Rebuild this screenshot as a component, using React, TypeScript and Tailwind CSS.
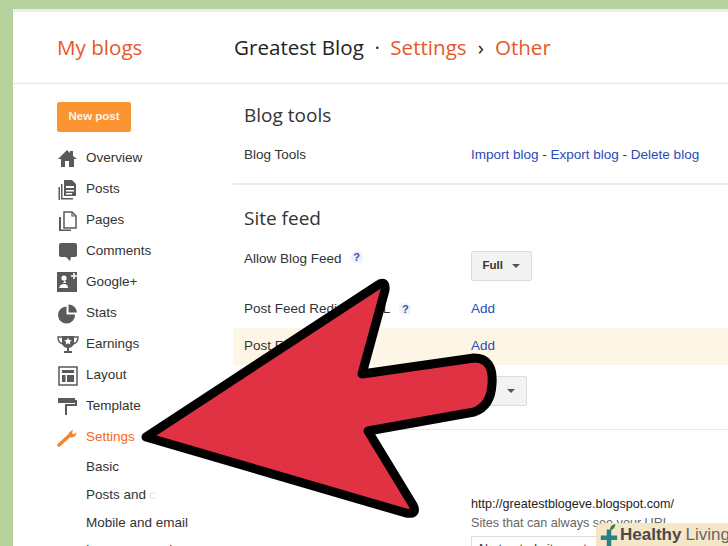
const navItems = [
  { label: "Overview", icon: "home" },
  { label: "Posts", icon: "posts" },
  { label: "Pages", icon: "pages" },
  { label: "Comments", icon: "comments" },
  { label: "Google+", icon: "google" },
  { label: "Stats", icon: "stats" },
  { label: "Earnings", icon: "earnings" },
  { label: "Layout", icon: "layout" },
  { label: "Template", icon: "template" },
];

const NavIcon = ({ name }: { name: string }) => {
  return (
    <svg width="22" height="22" viewBox="0 0 22 22" fill="#5a5a5a" className="shrink-0">
      {name === "home" && (
        <path d="M1 11 L10 2 L13 5 L13 3 L16 3 L16 8 L20 11 L17 11 L17 19 L12 19 L12 13 L8 13 L8 19 L4 19 L4 11 Z" />
      )}
      {name === "posts" && (
        <>
          <path d="M7 1 H15 L19 5 V17 H7 Z M9 7 V9 H17 V7 Z M9 11 V12.5 H17 V11 Z M9 14 V15.5 H15 V14 Z" fillRule="evenodd" />
          <path d="M4 5 H5.5 V19 H16 V20.5 H4 Z" />
          <path d="M1.5 8 H3 V21 H1.5 Z" />
        </>
      )}
      {name === "pages" && (
        <>
          <path d="M7 2 H15 L19 6 V18 H7 Z" fill="#fff" stroke="#5a5a5a" strokeWidth="1.5" />
          <path d="M15 2 V6 H19" fill="none" stroke="#5a5a5a" strokeWidth="1.2" />
          <path d="M2 7 H4 V19.5 H14 V21 H2 Z" />
        </>
      )}
      {name === "comments" && (
        <path d="M4 2 H18 Q20 2 20 4 V14 Q20 16 18 16 H14 L13 20 L9 16 H4 Q2 16 2 14 V4 Q2 2 4 2 Z" />
      )}
      {name === "google" && (
        <>
          <rect x="0" y="0" width="20" height="20" />
          <path d="M14 4 H20 M17 1 V7" stroke="#fff" strokeWidth="1.6" />
          <circle cx="7" cy="6" r="2.6" fill="#fff" />
          <path d="M2 16 Q3 12 7 12 Q11 12 11 16 Z" fill="#fff" />
          <path d="M8 8 L9 11 L6 11 Z" fill="#fff" />
        </>
      )}
      {name === "stats" && (
        <>
          <path d="M9.5 3.5 V11.5 H18 A8.5 8.5 0 1 1 9.5 3.5 Z" />
          <path d="M11.5 1.5 A8.5 8.5 0 0 1 20 9.5 H11.5 Z" />
        </>
      )}
      {name === "earnings" && (
        <>
          <path d="M5 2 H17 V8 Q17 13 12 14 V17 H15 V19 H7 V17 H10 V14 Q5 13 5 8 Z" />
          <path d="M5 3 H1 Q1 9 6 10 M17 3 H21 Q21 9 16 10" fill="none" stroke="#5a5a5a" strokeWidth="1.4" />
          <path d="M11 3.5 L12.2 6 L14.8 6.3 L12.9 8 L13.4 10.5 L11 9.2 L8.6 10.5 L9.1 8 L7.2 6.3 L9.8 6 Z" fill="#fff" />
        </>
      )}
      {name === "layout" && (
        <>
          <rect x="2" y="2" width="18" height="18" fill="none" stroke="#5a5a5a" strokeWidth="1.5" />
          <rect x="5" y="5" width="12" height="3" />
          <rect x="5" y="10" width="3.5" height="7" />
          <rect x="10" y="10" width="7" height="7" />
        </>
      )}
      {name === "template" && (
        <>
          <path d="M1 2 H18 V7 H1 Z" />
          <path d="M18 4 H20 V10 H10 V19 H8 V8 H18 Z" />
        </>
      )}
    </svg>
  );
};

const Help = () => {
  return (
    <span className="ml-[9px] flex h-[12px] w-[12px] items-center justify-center rounded-full bg-[#eef1f8] text-[11px] font-bold text-[#3a50b0]">
      ?
    </span>
  );
};

const Sidebar = () => {
  return (
    <div className="w-[220px] shrink-0 pl-[44px] pt-[18px]">
      <button className="flex h-[30px] w-[74px] items-center justify-center rounded-[2px] border border-[#f0973a] bg-[#fb9431] text-[11.5px] font-bold text-[#fff3e4]">
        New post
      </button>
      <div className="mt-[11px] flex flex-col">
        {navItems.map((item) => (
          <div key={item.label} className="flex h-[31px] items-center text-[#333]">
            <div className="w-[29px]">
              <NavIcon name={item.icon} />
            </div>
            <span>{item.label}</span>
          </div>
        ))}
        <div className="flex h-[31px] items-center text-[#f26a21]">
          <div className="w-[29px]">
            <svg width="20" height="20" viewBox="0 0 20 20" className="shrink-0">
              <path d="M2 17 L12 8" stroke="#f5842b" strokeWidth="3.6" strokeLinecap="round" />
              <path d="M12.5 9 Q10 5 13.5 3.5 L16 1.5 L15 5 L17 6.5 L19.5 4 Q19.5 8.5 15 9.5 Z" fill="#f5842b" />
            </svg>
          </div>
          <span>Settings</span>
        </div>
        <div className="ml-[29px] flex flex-col text-[#333]">
          <div className="flex h-[28px] items-center">Basic</div>
          <div className="flex h-[28px] items-center">
            Posts and <span className="ml-[3px] text-[#e8e8e8]">c</span>
          </div>
          <div className="flex h-[28px] items-center">Mobile and email</div>
          <div className="flex h-[26px] items-center">Language and</div>
        </div>
      </div>
    </div>
  );
};

const Dropdown = ({ label, width, gap }: { label: string; width: string; gap: string }) => {
  return (
    <div className={`flex h-[30px] items-center justify-end rounded-[2px] border border-[#dcdcdc] bg-[#f3f3f3] pr-[11px] text-[11.5px] font-bold text-[#333] ${width} ${gap}`}>
      <span>{label}</span>
      <span className="h-0 w-0 border-x-[4px] border-t-[4px] border-x-transparent border-t-[#555]" />
    </div>
  );
};

const Main = () => {
  return (
    <div className="min-w-0 flex-1 pt-[18px] text-[#333]">
      <h2 className="ml-[11px] font-['Open_Sans',sans-serif] text-[19px] leading-[26px] text-[#333]">Blog tools</h2>
      <div className="mt-[17px] flex h-[20px] items-center pl-[11px]">
        <span className="w-[227px]">Blog Tools</span>
        <span className="whitespace-nowrap text-[#2b4bb8]">
          Import blog <span className="text-[#333]">-</span> Export blog <span className="text-[#333]">-</span> Delete blog
        </span>
      </div>
      <div className="mt-[18px] h-[2px] bg-[#ececec]" />
      <h2 className="ml-[11px] mt-[20px] font-['Open_Sans',sans-serif] text-[19px] leading-[26px] text-[#333]">Site feed</h2>
      <div className="mt-[20px] flex h-[30px] pl-[11px]">
        <div className="flex w-[227px] items-start leading-[16px]">
          Allow Blog Feed
          <Help />
        </div>
        <Dropdown label="Full" width="w-[61px]" gap="gap-[9px]" />
      </div>
      <div className="mt-[18px] flex h-[20px] items-center pl-[11px]">
        <div className="flex w-[227px] items-center">
          Post Feed Redirect URL
          <Help />
        </div>
        <span className="text-[#2b4bb8]">Add</span>
      </div>
      <div className="mt-[9px] flex h-[37px] items-center bg-[#fdf6e6] pl-[11px]">
        <span className="w-[227px]">Post Feed Footer</span>
        <span className="text-[#2b4bb8]">Add</span>
      </div>
      <div className="mt-[11px] flex h-[30px] pl-[238px]">
        <Dropdown label="No" width="w-[56px]" gap="gap-[22px]" />
      </div>
      <div className="mt-[23px] h-px bg-[#e8e8e8]" />
      <div className="ml-[238px] mt-[66px] whitespace-nowrap text-[12.6px] leading-[16px] text-[#222]">
        http://greatestblogeve.blogspot.com/
      </div>
      <div className="ml-[238px] mt-[3px] whitespace-nowrap text-[12.6px] leading-[16px] text-[#666]">
        Sites that can always see your URL
      </div>
      <div className="ml-[238px] mt-[5px] h-[30px] w-[240px] border border-[#ddd] px-[7px] pt-[3px] text-[12.6px] text-[#333]">
        No trusted sites yet
      </div>
    </div>
  );
};

const Arrow = () => {
  return (
    <svg width="728" height="546" viewBox="0 0 728 546" className="pointer-events-none absolute left-0 top-0">
      <path
        d="M146 437 L378 285 Q386 280 385 290 L362 374 L474 358 Q494 358 492 384 Q491 406 474 412 L368 431 L413 505 Q418 515 406 513 Z"
        fill="#e03243"
        stroke="#000"
        strokeWidth="9"
        strokeLinejoin="round"
      />
    </svg>
  );
};

const Badge = () => {
  return (
    <div className="absolute bottom-0 right-0 flex h-[23px] w-[132px] items-center whitespace-nowrap rounded-tl-[6px] bg-[#f5e6c8] pl-[3px] text-[#4a4a4a]">
      <svg width="20" height="22" viewBox="0 0 22 24" className="shrink-0 self-end">
        <path d="M2 15 H20 M11 6 V24" stroke="#2f7f86" strokeWidth="5" />
        <path d="M12 7 Q12 1 18 0 Q18 6 12 7 Z" fill="#3f7d45" />
      </svg>
      <span className="ml-px text-[17px] leading-none font-bold">Healthy</span>
      <span className="ml-[4px] text-[17px] leading-none text-[#666]">Living</span>
    </div>
  );
};

const App = () => {
  return (
    <div className="relative h-[546px] w-[728px] overflow-hidden bg-[#b5d29d] pl-[13px] pt-[9px] font-['Liberation_Sans',sans-serif] text-[13.5px]">
      <div className="h-full border-t-[3px] border-[#ececec] bg-white">
        <div className="flex h-[72px] items-center border-b border-[#e6e6e6] font-['Open_Sans',sans-serif] text-[20.6px]">
          <span className="ml-[44px] w-[177px] text-[#e8572a]">My blogs</span>
          <span className="text-[#222]">Greatest Blog</span>
          <span className="mx-[10.5px] text-[#222]">·</span>
          <span className="text-[#e8572a]">Settings</span>
          <span className="mx-[11px] text-[#222]">›</span>
          <span className="text-[#e8572a]">Other</span>
        </div>
        <div className="flex">
          <Sidebar />
          <Main />
        </div>
      </div>
      <Arrow />
      <Badge />
    </div>
  );
};

export default App;
